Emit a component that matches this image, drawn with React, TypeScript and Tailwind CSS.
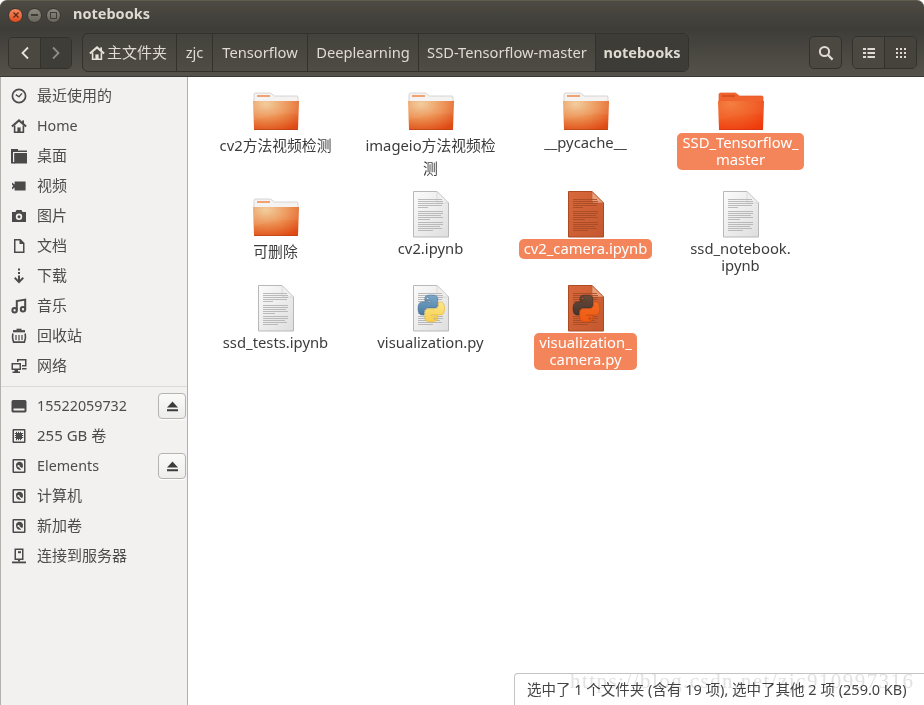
import React from "react";

const FONT = "font-['Noto_Sans','Noto_Sans_CJK_SC',sans-serif]";

function HouseShape() {
  return (
    <g>
      <path d="M0.9 8.6 8 2.4l7.1 6.2" fill="none" stroke="currentColor" strokeWidth="2" />
      <path d="M3.6 7.5V14.2H12.4V7.5" fill="none" stroke="currentColor" strokeWidth="1.6" />
      <rect x="6.4" y="9.4" width="3.2" height="5" fill="currentColor" />
      <rect x="11.2" y="2.4" width="1.8" height="3.6" fill="currentColor" />
    </g>
  );
}

const Icons: Record<string, React.ReactNode> = {
  recent: (
    <g fill="none" stroke="currentColor">
      <circle cx="8" cy="8" r="6.6" strokeWidth="1.7" />
      <path d="M4.8 6.6 8 8.8l3-3.4" strokeWidth="1.3" />
    </g>
  ),
  home: <HouseShape />,
  folder: (
    <g fill="currentColor">
      <path d="M0 1h7v1.6h9V4H2V14H0Z" />
      <rect x="3.2" y="5" width="12.8" height="10.5" />
      <rect x="0" y="14" width="4" height="1.5" />
    </g>
  ),
  video: <path d="M1 4.5 3.6 6.6V3.5h11v9h-11V9.4L1 11.5V9.5L2.2 8 1 6.5Z" fill="currentColor" />,
  camera: (
    <path
      fillRule="evenodd"
      d="M5.5 2h5l1 2H15v10H1V4h3.5ZM8 5.6a3.2 3.2 0 1 0 0 6.4 3.2 3.2 0 0 0 0-6.4Zm0 1.7a1.5 1.5 0 1 1 0 3 1.5 1.5 0 0 1 0-3Z"
      fill="currentColor"
    />
  ),
  doc: <path d="M3 1h6.5L13.5 5v10H3Z M4.5 2.5v11h7.5V6H8.5V2.5Z" fill="currentColor" fillRule="evenodd" />,
  download: (
    <g fill="currentColor">
      <rect x="7" y="0.5" width="2" height="2" />
      <rect x="7" y="4" width="2" height="2" />
      <path d="M7 7.5h2v4.2l2.6-2.6 1.3 1.4L8 15.4 3.1 10.5l1.3-1.4L7 11.7Z" />
    </g>
  ),
  music: (
    <g fill="none" stroke="currentColor" strokeWidth="2">
      <circle cx="3.6" cy="12.2" r="2.2" />
      <circle cx="12" cy="11.2" r="2.2" />
      <path d="M5.8 12.2V3l8.4-1.4v9.6" />
    </g>
  ),
  trash: (
    <g fill="none" stroke="currentColor">
      <path d="M2 3.2h12" strokeWidth="2.2" />
      <path d="M5.5 1.4h5" strokeWidth="1.4" />
      <path d="M1.8 5.5c-.6 3 0 6.5.8 8.6h10.8c.8-2.1 1.4-5.6.8-8.6" strokeWidth="1.6" />
      <path d="M5 7v5M8 7v5.5M11 7v5" strokeWidth="1.2" />
    </g>
  ),
  network: (
    <g fill="currentColor">
      <path fillRule="evenodd" d="M0.5 5h9.5v7H7v1.5h2V15H1.5v-1.5h2V12H0.5ZM2 6.5v4h6.5v-4Z" />
      <path d="M6 1h9.5v7.5H11V7h3V2.5H7.5V4H6Z" />
      <path d="M11 10h4.5v1.5H11Z" />
    </g>
  ),
  drive: (
    <path
      fillRule="evenodd"
      d="M2.5 2h11A1.8 1.8 0 0 1 15.5 3.8v8.7A1.8 1.8 0 0 1 13.5 14.5h-11A1.8 1.8 0 0 1 .5 12.5V3.8A1.8 1.8 0 0 1 2.5 2ZM2.5 10.5v2h11v-2Z"
      fill="currentColor"
    />
  ),
  chip: (
    <g fill="currentColor">
      <path fillRule="evenodd" d="M2.5 1h11A1 1 0 0 1 14.5 2v12a1 1 0 0 1-1 1h-11a1 1 0 0 1-1-1V2a1 1 0 0 1 1-1ZM3 2.5v11h10v-11Z" />
      <rect x="5" y="5" width="6" height="6" />
      {[5, 7, 9].map((v) => (
        <g key={v}>
          <rect x={v} y="3.8" width="1" height="8.4" />
          <rect x="3.8" y={v} width="8.4" height="1" />
        </g>
      ))}
    </g>
  ),
  disk: (
    <g fill="currentColor">
      <path fillRule="evenodd" d="M2.5 1h11A1 1 0 0 1 14.5 2v12a1 1 0 0 1-1 1h-11a1 1 0 0 1-1-1V2a1 1 0 0 1 1-1ZM3 2.5v11h10v-11Z" />
      <path fillRule="evenodd" d="M8 3.8a4 4 0 0 1 4 4c0 1-.3 1.8-.9 2.5L8.5 8.2A1 1 0 1 0 7.6 9l2.6 2.6A4 4 0 1 1 8 3.8Z" />
    </g>
  ),
  server: (
    <g fill="currentColor">
      <path fillRule="evenodd" d="M3.5 .5h9v11.5h-9ZM5 2v8.5h6V2Z" />
      <rect x="7" y="3.2" width="3" height="2" />
      <rect x="7" y="12" width="2" height="1.5" />
      <rect x="1" y="13.5" width="14" height="1.8" />
    </g>
  ),
};

function SideIcon({ name }: { name: string }) {
  return (
    <svg viewBox="0 0 16 16" className="w-4 h-4 shrink-0 text-[#4a4a4a]">
      {Icons[name]}
    </svg>
  );
}

function Eject() {
  return (
    <div className="w-7 h-[26px] mr-[1px] rounded-[4px] border border-[#b5b3ae] bg-gradient-to-b from-[#fafaf9] to-[#eeedeb] flex items-center justify-center shadow-[0_1px_0_#ffffff]">
      <svg viewBox="0 0 14 12" className="w-[13px] h-[11px] text-[#3c3c3c]">
        <path d="M7 0.5 13 7H1Z M1 9h12v2.2H1Z" fill="currentColor" />
      </svg>
    </div>
  );
}

function SideRow({ icon, label, eject }: { icon: string; label: string; eject?: boolean }) {
  const cjk = /[\u4e00-\u9fff]/.test(label);
  return (
    <div className="h-[30px] flex items-center pl-[10px] gap-[10px] text-[#4c4c4c]">
      <SideIcon name={icon} />
      <span className={"flex-1 truncate pb-[1px] " + (cjk ? "text-[15px]" : "text-[14.3px]")}>{label}</span>
      {eject && <Eject />}
    </div>
  );
}

function Folder({ selected, id }: { selected?: boolean; id: string }) {
  return (
    <svg viewBox="0 0 48 48" className="w-12 h-12">
      <defs>
        <radialGradient id={id} cx="0.28" cy="0.1" r="1">
          <stop offset="0" stopColor={selected ? "#f47a3a" : "#f2cb98"} />
          <stop offset="0.5" stopColor={selected ? "#f15f25" : "#ec8f50"} />
          <stop offset="1" stopColor={selected ? "#ef3a0e" : "#df4a14"} />
        </radialGradient>
      </defs>
      <path
        d="M2 9.5a1.5 1.5 0 0 1 1.5-1.5h15l4 3H45a1 1 0 0 1 1 1v5H2Z"
        fill={selected ? "#f0622e" : "#f4f3f1"}
        stroke={selected ? "#e85a28" : "#c9c6c2"}
        strokeWidth="0.7"
      />
      <rect x="5" y="10" width="13" height="2" fill={selected ? "#d9501f" : "#f0a272"} />
      <path d="M1 16h46l-1 28.4a1 1 0 0 1-1 .6H3a1 1 0 0 1-1-.6Z" fill={`url(#${id})`} />
      <path d="M1.4 16h45.2l-.5 14C32 27 16 32 1.9 35Z" fill="#ffffff" opacity={selected ? 0.03 : 0.06} />
      <path d="M2 44.4h44l-.2.6H2.2Z" fill={selected ? "#c8300c" : "#a83c12"} />
    </svg>
  );
}

function DocLines({ color }: { color: string }) {
  const rows: [number, number][] = [
    [8, 24],
    [10, 25],
    [12, 25],
    [14, 24],
    [16, 10],
    [20, 25],
    [22, 25],
    [24, 23],
    [26, 25],
    [28, 12],
    [31, 25],
    [33, 25],
    [35, 22],
    [37, 24],
    [39, 15],
  ];
  return (
    <g fill={color}>
      {rows.map(([y, w]) => (
        <rect key={y} x="11" y={y} width={w} height="0.9" />
      ))}
    </g>
  );
}

const PY_BLUE =
  "M54.919 0c-4.584.022-8.961.413-12.812 1.095C30.76 3.099 28.7 7.295 28.7 15.032v10.219h26.812v3.406H18.638c-7.792 0-14.616 4.684-16.75 13.594-2.462 10.213-2.571 16.586 0 27.25 1.906 7.938 6.458 13.594 14.25 13.594h9.219v-12.25c0-8.85 7.657-16.656 16.75-16.656h26.781c7.455 0 13.406-6.138 13.406-13.625V15.032c0-7.266-6.13-12.725-13.406-13.937C64.282.328 59.502-.02 54.918.001zm-14.5 8.219c2.77 0 5.031 2.299 5.031 5.125 0 2.816-2.262 5.094-5.031 5.094-2.779 0-5.031-2.278-5.031-5.094 0-2.826 2.252-5.125 5.031-5.125z";
const PY_YELLOW =
  "M85.638 28.657v11.906c0 9.231-7.826 17-16.75 17H42.106c-7.336 0-13.406 6.279-13.406 13.625v25.531c0 7.266 6.319 11.54 13.406 13.625 8.487 2.496 16.626 2.947 26.781 0 6.75-1.954 13.406-5.888 13.406-13.625V86.501H55.513v-3.405h40.187c7.792 0 10.696-5.436 13.406-13.594 2.799-8.399 2.68-16.476 0-27.25-1.926-7.757-5.604-13.594-13.406-13.594H85.638zM70.575 93.313c2.779 0 5.031 2.278 5.031 5.094 0 2.826-2.252 5.125-5.031 5.125-2.77 0-5.031-2.299-5.031-5.125 0-2.816 2.262-5.094 5.031-5.094z";

function Doc({ selected, python, id }: { selected?: boolean; python?: boolean; id: string }) {
  return (
    <svg viewBox="0 0 48 48" className="w-12 h-12">
      <defs>
        <linearGradient id={id} x1="0" y1="0" x2="1" y2="1">
          <stop offset="0" stopColor={selected ? "#d8683c" : "#fbfbfb"} />
          <stop offset="1" stopColor={selected ? "#c4582e" : "#dedede"} />
        </linearGradient>
        <linearGradient id={`${id}b`} x1="0" y1="0" x2="0" y2="1">
          <stop offset="0" stopColor={selected ? "#6a4c3a" : "#7aa9c9"} />
          <stop offset="1" stopColor={selected ? "#46352c" : "#4a7aa3"} />
        </linearGradient>
        <linearGradient id={`${id}y`} x1="0" y1="0" x2="0" y2="1">
          <stop offset="0" stopColor={selected ? "#f26a22" : "#fbe68c"} />
          <stop offset="1" stopColor={selected ? "#ee5a12" : "#f7cf4a"} />
        </linearGradient>
      </defs>
      <path
        d="M6.5 0.5H30L41.5 12V46H6.5Z"
        fill={`url(#${id})`}
        stroke={selected ? "#ad4a22" : "#b8b8b8"}
        strokeWidth="1"
      />
      <path d="M30 0.5 41.5 12H32a2 2 0 0 1-2-2Z" fill={selected ? "#e8a07c" : "#efefef"} stroke={selected ? "#b8552c" : "#cfcfcf"} strokeWidth="0.6" />
      <DocLines color={selected ? "#a84c26" : "#b4b4b4"} />
      {python && (
        <g transform="translate(11 10) scale(0.24)">
          <path d={PY_BLUE} fill={`url(#${id}b)`} stroke={selected ? "#2e2420" : "#3a6486"} strokeWidth="2" />
          <path d={PY_YELLOW} fill={`url(#${id}y)`} stroke={selected ? "#c9460c" : "#d9a925"} strokeWidth="2" />
        </g>
      )}
    </svg>
  );
}

type Item = { kind: "folder" | "doc" | "py"; lines: string[]; selected?: boolean; tall?: boolean };

const items: Item[] = [
  { kind: "folder", lines: ["cv2方法视频检测"], tall: true },
  { kind: "folder", lines: ["imageio方法视频检", "测"], tall: true },
  { kind: "folder", lines: ["__pycache__"] },
  { kind: "folder", lines: ["SSD_Tensorflow_", "master"], selected: true },
  { kind: "folder", lines: ["可删除"], tall: true },
  { kind: "doc", lines: ["cv2.ipynb"] },
  { kind: "doc", lines: ["cv2_camera.ipynb"], selected: true },
  { kind: "doc", lines: ["ssd_notebook.", "ipynb"] },
  { kind: "doc", lines: ["ssd_tests.ipynb"] },
  { kind: "py", lines: ["visualization.py"] },
  { kind: "py", lines: ["visualization_", "camera.py"], selected: true },
];

function Tile({ item, i }: { item: Item; i: number }) {
  const id = `g${i}`;
  return (
    <div className="flex flex-col items-center">
      <div className="h-12 w-12">
        {item.kind === "folder" ? (
          <Folder selected={item.selected} id={id} />
        ) : (
          <Doc selected={item.selected} python={item.kind === "py"} id={id} />
        )}
      </div>
      <div
        className={
          "text-center text-[14.8px] px-[5px] pt-[1px] pb-[2px] rounded-[5px] whitespace-nowrap " +
          (item.selected ? "bg-[#f4845a] text-white" : "text-[#3c3c3c]")
        }
      >
        {item.lines.map((l) => (
          <div key={l} className={item.tall ? "leading-[23px]" : "leading-[17px]"}>
            {l}
          </div>
        ))}
      </div>
    </div>
  );
}

const crumbs: [string, string][] = [
  ["zjc", "w-9"],
  ["Tensorflow", "w-[95px]"],
  ["Deeplearning", "w-[111px]"],
  ["SSD-Tensorflow-master", "w-[177px]"],
];

export default function App() {
  return (
    <div className={`w-[924px] h-[705px] relative overflow-hidden bg-white flex flex-col text-[14.5px] ${FONT}`}>
      {/* title bar */}
      <div className="h-[29px] shrink-0 rounded-t-[7px] border-t border-[#5f5b4c] bg-gradient-to-b from-[#4c4a42] to-[#3f3d38] flex items-center pl-2">
        <div className="w-[15px] h-[15px] rounded-full bg-gradient-to-b from-[#f58a5f] to-[#e2481c] border border-[#3a3630] flex items-center justify-center">
          <svg viewBox="0 0 8 8" className="w-2 h-2 text-[#5c2a14]">
            <path d="M1.5 1.5l5 5M6.5 1.5l-5 5" stroke="currentColor" strokeWidth="1.3" />
          </svg>
        </div>
        <div className="w-[15px] h-[15px] ml-1 rounded-full bg-gradient-to-b from-[#8d8a80] to-[#68655c] border border-[#3a3630] flex items-center justify-center">
          <div className="w-[7px] h-[2px] bg-[#3f3d38]" />
        </div>
        <div className="w-[15px] h-[15px] ml-1 rounded-full bg-gradient-to-b from-[#8d8a80] to-[#68655c] border border-[#3a3630] flex items-center justify-center">
          <div className="w-[7px] h-[7px] border border-[#3f3d38]" />
        </div>
        <span className="ml-[12px] pb-[2px] font-bold text-[#dfdbd2]">notebooks</span>
      </div>

      {/* toolbar */}
      <div className="h-[48px] shrink-0 bg-gradient-to-b from-[#3f3d38] to-[#55524b] border-b border-[#3a3833] flex items-center pl-2 pr-[7px] text-[#dfdbd2]">
        <div className="w-16 h-8 rounded-[5px] border border-[#33312c] flex overflow-hidden">
          <div className="w-[32px] bg-[#4a4841] border-r border-[#33312c] flex items-center justify-center">
            <svg viewBox="0 0 10 14" className="w-[10px] h-[14px] text-[#e6e3db]">
              <path d="M8 1.5 2.5 7 8 12.5" fill="none" stroke="currentColor" strokeWidth="1.8" />
            </svg>
          </div>
          <div className="flex-1 bg-[#3f3d38] flex items-center justify-center">
            <svg viewBox="0 0 10 14" className="w-[10px] h-[14px] text-[#8f8c84]">
              <path d="M2 1.5 7.5 7 2 12.5" fill="none" stroke="currentColor" strokeWidth="1.8" />
            </svg>
          </div>
        </div>

        <div className="ml-[10px] h-[39px] w-[607px] rounded-[6px] border border-[#33312c] flex overflow-hidden bg-gradient-to-b from-[#44423c] to-[#4f4c45]">
          <div className="w-[94px] flex items-center pl-[6px] gap-[2px] border-r border-[#33312c]">
            <svg viewBox="0 0 16 16" className="w-4 h-4 text-[#e6e3db]">
              <HouseShape />
            </svg>
            <span className="whitespace-nowrap text-[15px]">主文件夹</span>
          </div>
          {crumbs.map(([t, w]) => (
            <div key={t} className={`${w} shrink-0 flex items-center justify-center border-r border-[#33312c] text-[14.7px]`}>
              {t}
            </div>
          ))}
          <div className="flex-1 flex items-center justify-center bg-[#3e3c37] font-bold">notebooks</div>
        </div>

        <div className="ml-auto w-[33px] h-[33px] rounded-[5px] border border-[#33312c] bg-[#4a4841] flex items-center justify-center">
          <svg viewBox="0 0 16 16" className="w-4 h-4 text-[#dfdbd2]">
            <circle cx="6.5" cy="6.5" r="4.6" fill="none" stroke="currentColor" strokeWidth="2" />
            <path d="M10 10l4.6 4.6" stroke="currentColor" strokeWidth="2.2" />
          </svg>
        </div>
        <div className="ml-[10px] w-[65px] h-[33px] rounded-[5px] border border-[#33312c] flex overflow-hidden">
          <div className="w-[32px] bg-[#4a4841] border-r border-[#33312c] flex items-center justify-center">
            <svg viewBox="0 0 12 10" className="w-3 h-[10px] text-[#dfdbd2]" fill="currentColor">
              <rect x="0" y="0" width="3" height="2" />
              <rect x="4.5" y="0" width="7.5" height="2" />
              <rect x="0" y="4" width="3" height="2" />
              <rect x="4.5" y="4" width="7.5" height="2" />
              <rect x="0" y="8" width="3" height="2" />
              <rect x="4.5" y="8" width="7.5" height="2" />
            </svg>
          </div>
          <div className="flex-1 bg-[#45433c] flex items-center justify-center">
            <svg viewBox="0 0 10 10" className="w-[10px] h-[10px] text-[#dfdbd2]" fill="currentColor">
              {[0, 4, 8].flatMap((y) =>
                [0, 4, 8].map((x) => <rect key={`${x}${y}`} x={x} y={y} width="2" height="2" />)
              )}
            </svg>
          </div>
        </div>
      </div>

      {/* body */}
      <div className="flex-1 flex min-h-0">
        <aside className="w-[188px] shrink-0 bg-[#f2f1f0] border-l border-r border-[#b3b1ac] pt-1">
          <SideRow icon="recent" label="最近使用的" />
          <SideRow icon="home" label="Home" />
          <SideRow icon="folder" label="桌面" />
          <SideRow icon="video" label="视频" />
          <SideRow icon="camera" label="图片" />
          <SideRow icon="doc" label="文档" />
          <SideRow icon="download" label="下载" />
          <SideRow icon="music" label="音乐" />
          <SideRow icon="trash" label="回收站" />
          <SideRow icon="network" label="网络" />
          <div className="h-[10px] flex items-center">
            <div className="h-[1px] w-full bg-[#dcdad7]" />
          </div>
          <SideRow icon="drive" label="15522059732" eject />
          <SideRow icon="chip" label="255 GB 卷" />
          <SideRow icon="disk" label="Elements" eject />
          <SideRow icon="disk" label="计算机" />
          <SideRow icon="disk" label="新加卷" />
          <SideRow icon="server" label="连接到服务器" />
        </aside>
        <main className="flex-1 pt-2 pl-[10px] bg-white">
          <div className="grid grid-cols-[repeat(4,155px)] grid-rows-[106px_94px_94px]">
            {items.map((it, i) => (
              <Tile key={i} item={it} i={i} />
            ))}
          </div>
        </main>
      </div>

      {/* floating status */}
      <div className="absolute right-0 bottom-0 w-[410px] h-[32px] bg-white border-t border-l border-[#c4c4c4] rounded-tl-[4px] pl-3 flex items-center text-[#444444] whitespace-nowrap">
        选中了 1 个文件夹 (含有 19 项), 选中了其他 2 项 (259.0 KB)
      </div>
      {/* watermark */}
      <div className="absolute left-[570px] top-[669px] text-[21px] leading-[24px] tracking-[1.45px] text-[#e2e2e2] mix-blend-multiply font-['Liberation_Serif',serif] whitespace-nowrap pointer-events-none">
        https://blog.csdn.net/zjc910997316
      </div>
    </div>
  );
}
